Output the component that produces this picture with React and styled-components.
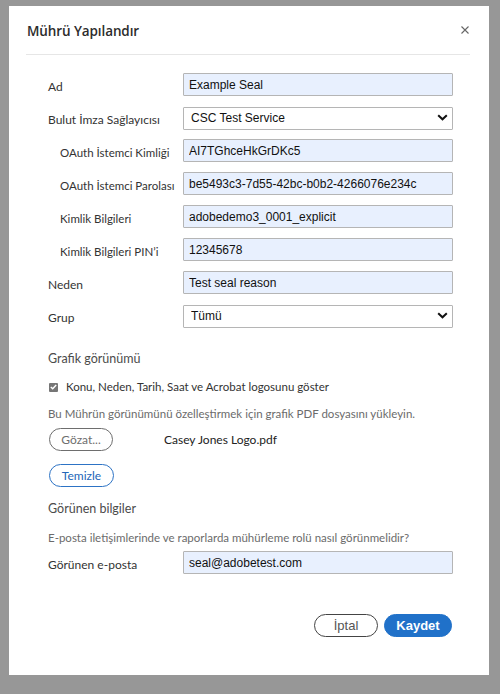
import React from 'react';
import styled, { createGlobalStyle } from 'styled-components';

const GlobalStyle = createGlobalStyle`
  html, body {
    margin: 0;
    padding: 0;
    background: #979797;
  }
  body {
    font-family: Lato, "Open Sans", sans-serif;
  }
`;

const Backdrop = styled.div`
  padding: 6px 11px 19px 9px;
  height: 694px;
  box-sizing: border-box;
`;

const Dialog = styled.div`
  background: #fff;
  height: 669px;
  box-sizing: border-box;
  padding: 0 19px 0 17px;
  display: flex;
  flex-direction: column;
`;

const Header = styled.div`
  height: 49px;
  display: flex;
  align-items: center;
  justify-content: space-between;
  border-bottom: 1px solid #e6e6e6;
  padding: 2px 0 0 1px;
  box-sizing: border-box;
`;

const Title = styled.h1`
  margin: 0;
  font-family: "Open Sans", sans-serif;
  font-size: 13.5px;
  font-weight: 600;
  color: #2c2c2c;
  letter-spacing: -0.1px;
`;

const CloseButton = styled.button`
  border: 0;
  background: none;
  padding: 0;
  width: 12px;
  height: 12px;
  margin-right: -1px;
  margin-top: -2px;
  display: flex;
  align-items: center;
  justify-content: center;
  cursor: pointer;
`;

const Body = styled.div`
  padding: 18px 0 0 22px;
  display: flex;
  flex-direction: column;
`;

const Row = styled.div`
  display: grid;
  grid-template-columns: 135px 270px;
  align-items: center;
  height: 23px;
  margin-bottom: 10px;
  margin-top: ${p => p.$top || 0}px;
`;

const Label = styled.label`
  font-size: ${p => (p.$sub ? '11.5px' : '12px')};
  color: #333;
  padding-left: ${p => (p.$sub ? '12px' : '0')};
  padding-top: 3px;
`;

const Input = styled.input`
  box-sizing: border-box;
  width: 270px;
  height: 23px;
  margin: 0;
  border: 1px solid #b5b5b5;
  border-radius: 1px;
  background: #e8f0fe;
  font-family: "Liberation Sans", Arial, sans-serif;
  font-size: 12px;
  color: #111;
  padding: 0 5px;
  outline: none;
`;

const SelectWrap = styled.div`
  position: relative;
  width: 270px;
  height: 23px;
`;

const Select = styled.select`
  appearance: none;
  box-sizing: border-box;
  width: 270px;
  height: 23px;
  margin: 0;
  border: 1px solid #b5b5b5;
  border-radius: 1px;
  background: #fff;
  font-family: "Liberation Sans", Arial, sans-serif;
  font-size: 12px;
  color: #111;
  padding: 0 7px;
  outline: none;
`;

const Chevron = styled.svg`
  position: absolute;
  right: 5px;
  top: 8px;
  pointer-events: none;
`;

const SectionTitle = styled.div`
  font-size: 12.5px;
  color: #4b4b4b;
  margin-top: ${p => p.$top || 0}px;
  line-height: 16px;
`;

const CheckRow = styled.label`
  display: flex;
  align-items: center;
  gap: 8px;
  margin-top: 12px;
  padding-left: 1px;
  font-size: 11.5px;
  color: #333;
  line-height: 16px;
`;

const CheckBox = styled.span`
  width: 9px;
  height: 9px;
  background: #767676;
  border-radius: 1px;
  display: flex;
  align-items: center;
  justify-content: center;
`;

const Hint = styled.div`
  font-size: 11.5px;
  color: #6b6b6b;
  line-height: 16px;
  margin-top: ${p => p.$top || 0}px;
`;

const FileRow = styled.div`
  display: flex;
  align-items: center;
  margin-top: 6px;
`;

const PillButton = styled.button`
  box-sizing: border-box;
  height: 23px;
  width: ${p => p.$w}px;
  border-radius: 12px;
  border: 1px solid ${p => (p.$blue ? '#2d73c5' : '#6e6e6e')};
  background: #fff;
  color: ${p => (p.$blue ? '#2466b8' : '#6e6e6e')};
  font-family: Lato, "Open Sans", sans-serif;
  font-size: 12px;
  padding: 0;
  margin-left: 1px;
  cursor: pointer;
`;

const FileName = styled.span`
  font-size: 12px;
  color: #222;
  margin-left: 51px;
`;

const ClearRow = styled.div`
  margin-top: 13px;
`;

const Footer = styled.div`
  display: flex;
  justify-content: flex-end;
  gap: 6px;
  padding-right: 18px;
  margin-top: 30px;
`;

const FooterButton = styled.button`
  box-sizing: border-box;
  height: 23px;
  width: ${p => p.$w}px;
  border-radius: 12px;
  font-family: "Liberation Sans", Arial, sans-serif;
  font-size: 13px;
  padding: 0;
  cursor: pointer;
  border: 1px solid ${p => (p.$primary ? '#2071c9' : '#444')};
  background: ${p => (p.$primary ? '#2071c9' : '#fff')};
  color: ${p => (p.$primary ? '#fff' : '#555')};
  font-weight: ${p => (p.$primary ? 700 : 400)};
`;

const rows = [
  { label: 'Ad', value: 'Example Seal' },
  { label: 'Bulut İmza Sağlayıcısı', select: 'CSC Test Service' },
  { label: 'OAuth İstemci Kimliği', value: 'AI7TGhceHkGrDKc5', sub: true },
  { label: 'OAuth İstemci Parolası', value: 'be5493c3-7d55-42bc-b0b2-4266076e234c', sub: true },
  { label: 'Kimlik Bilgileri', value: 'adobedemo3_0001_explicit', sub: true },
  { label: 'Kimlik Bilgileri PIN\u2019i', value: '12345678', sub: true },
  { label: 'Neden', value: 'Test seal reason' },
  { label: 'Grup', select: 'Tümü' },
];

const ChevronIcon = () => (
  <Chevron width="11" height="7" viewBox="0 0 11 7">
    <path d="M1.2 1.2 L5.5 5.3 L9.8 1.2" fill="none" stroke="#111" strokeWidth="2" />
  </Chevron>
);

const FieldRow = ({ row }) => (
  <Row>
    <Label $sub={row.sub}>{row.label}</Label>
    {row.select ? (
      <SelectWrap>
        <Select defaultValue={row.select}>
          <option>{row.select}</option>
        </Select>
        <ChevronIcon />
      </SelectWrap>
    ) : (
      <Input defaultValue={row.value} />
    )}
  </Row>
);

export default function App() {
  return (
    <>
      <GlobalStyle />
      <Backdrop>
        <Dialog>
          <Header>
            <Title>Mührü Yapılandır</Title>
            <CloseButton aria-label="Kapat">
              <svg width="8" height="8" viewBox="0 0 8 8">
                <path d="M0.5 0.5 L7.5 7.5 M7.5 0.5 L0.5 7.5" stroke="#666" strokeWidth="1.1" />
              </svg>
            </CloseButton>
          </Header>
          <Body>
            {rows.map(r => (
              <FieldRow key={r.label} row={r} />
            ))}

            <SectionTitle $top={14}>Grafik görünümü</SectionTitle>
            <CheckRow>
              <CheckBox>
                <svg width="7" height="6" viewBox="0 0 7 6">
                  <path d="M0.8 3 L2.7 4.8 L6.2 1" fill="none" stroke="#fff" strokeWidth="1.4" />
                </svg>
              </CheckBox>
              Konu, Neden, Tarih, Saat ve Acrobat logosunu göster
            </CheckRow>
            <Hint $top={11}>Bu Mührün görünümünü özelleştirmek için grafik PDF dosyasını yükleyin.</Hint>
            <FileRow>
              <PillButton $w={64}>Gözat...</PillButton>
              <FileName>Casey Jones Logo.pdf</FileName>
            </FileRow>
            <ClearRow>
              <PillButton $w={65} $blue>Temizle</PillButton>
            </ClearRow>

            <SectionTitle $top={14}>Görünen bilgiler</SectionTitle>
            <Hint $top={13}>E-posta iletişimlerinde ve raporlarda mühürleme rolü nasıl görünmelidir?</Hint>
            <Row $top={5}>
              <Label>Görünen e-posta</Label>
              <Input defaultValue="seal@adobetest.com" />
            </Row>
          </Body>
          <Footer>
            <FooterButton $w={64}>İptal</FooterButton>
            <FooterButton $w={68} $primary>Kaydet</FooterButton>
          </Footer>
        </Dialog>
      </Backdrop>
    </>
  );
}
